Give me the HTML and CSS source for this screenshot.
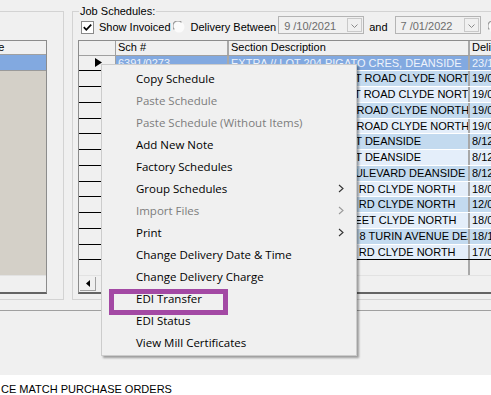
FILE: index.html
```html
<!DOCTYPE html>
<html>
<head>
<meta charset="utf-8">
<link rel="stylesheet" href="styles.css">
</head>
<body>
<div class="top">
  <div class="grp left-grp">
    <div class="grid mini">
      <div class="mhead">Name</div>
      <div class="mrow sel"></div>
      <div class="mbody"></div>
      <div class="hscroll"></div>
    </div>
  </div>
  <div class="grp job-grp">
    <div class="grp-title">Job Schedules:</div>
    <div class="filters">
      <svg class="chk" width="13" height="13" viewBox="0 0 13 13"><rect x="0.5" y="0.5" width="12" height="12" fill="#fff" stroke="#8a8a8a"/><path d="M2.8 6.2 L5.3 8.8 L10.2 3.6" fill="none" stroke="#000" stroke-width="1.7"/></svg>
      <span class="lbl">Show Invoiced</span>
      <svg class="radio" width="12" height="12" viewBox="0 0 12 12"><circle cx="6" cy="6" r="5.5" fill="#fbfbfb"/><path d="M1.3 8.5 A5 5 0 0 1 8.5 1.3" fill="none" stroke="#9a9a9a" stroke-width="1.2"/></svg>
      <span class="lbl dl">Delivery Between</span>
      <div class="picker"><span class="pv">9 /10/2021</span><span class="dd"><svg width="7" height="4" viewBox="0 0 7 4"><path d="M0.5 0.5 L3.5 3.5 L6.5 0.5" fill="none" stroke="#8a8a8a"/></svg></span></div>
      <span class="lbl and">and</span>
      <div class="picker p2"><span class="pv">7 /01/2022</span><span class="dd"><svg width="7" height="4" viewBox="0 0 7 4"><path d="M0.5 0.5 L3.5 3.5 L6.5 0.5" fill="none" stroke="#8a8a8a"/></svg></span></div>
      <svg class="radio r2" width="12" height="12" viewBox="0 0 12 12"><circle cx="6" cy="6" r="5.5" fill="#fbfbfb"/><path d="M1.3 8.5 A5 5 0 0 1 8.5 1.3" fill="none" stroke="#9a9a9a" stroke-width="1.2"/></svg>
    </div>
    <div class="grid job">
      <div class="grow ghead">
        <div class="c rh"></div><div class="c">Sch #</div><div class="c">Section Description</div><div class="c">Delivery Date</div>
      </div>
      <div class="grow sel"><div class="c rh"><svg class="ind" width="7" height="9" viewBox="0 0 7 9"><path d="M0 0 L7 4.5 L0 9 Z" fill="#000"/></svg></div><div class="c">6391/0273</div><div class="c">EXTRA // LOT 204 PIGATO CRES, DEANSIDE</div><div class="c">23/11/2021</div></div>
      <div class="grow a"><div class="c rh"></div><div class="c">6391/0274</div><div class="c">EXTRA // LOT 1410 HUNT ROAD CLYDE NORTH</div><div class="c">19/01/2022</div></div>
      <div class="grow b"><div class="c rh"></div><div class="c">6391/0275</div><div class="c">EXTRA // LOT 1411 HUNT ROAD CLYDE NORTH</div><div class="c">19/01/2022</div></div>
      <div class="grow a"><div class="c rh"></div><div class="c">6391/0276</div><div class="c">LOT 2207 THOMPSONS ROAD CLYDE NORTH</div><div class="c">19/01/2022</div></div>
      <div class="grow b"><div class="c rh"></div><div class="c">6391/0277</div><div class="c">LOT 2208 THOMPSONS ROAD CLYDE NORTH</div><div class="c">19/01/2022</div></div>
      <div class="grow a"><div class="c rh"></div><div class="c">6391/0278</div><div class="c">LOT 118 ELM CRESCENT DEANSIDE</div><div class="c">8/12/2021</div></div>
      <div class="grow b"><div class="c rh"></div><div class="c">6391/0279</div><div class="c">LOT 119 ELM CRESCENT DEANSIDE</div><div class="c">8/12/2021</div></div>
      <div class="grow a"><div class="c rh"></div><div class="c">6391/0280</div><div class="c">LOT 707 RIVERSIDE BOULEVARD DEANSIDE</div><div class="c">8/12/2021</div></div>
      <div class="grow b"><div class="c rh"></div><div class="c">6391/0281</div><div class="c">LOT 6501 PATTERSONS RD CLYDE NORTH</div><div class="c">18/01/2022</div></div>
      <div class="grow a"><div class="c rh"></div><div class="c">6391/0282</div><div class="c">LOT 6502 PATTERSONS RD CLYDE NORTH</div><div class="c">12/01/2022</div></div>
      <div class="grow b"><div class="c rh"></div><div class="c">6391/0283</div><div class="c">LOT 9111 GRAHAM STREET CLYDE NORTH</div><div class="c">18/01/2022</div></div>
      <div class="grow a"><div class="c rh"></div><div class="c">6391/0284</div><div class="c">EXTRA // LOT 4035 UNIT 8 TURIN AVENUE DEANSIDE</div><div class="c">18/11/2021</div></div>
      <div class="grow b last"><div class="c rh"></div><div class="c">6391/0285</div><div class="c">LOT 6503 PATTERSONS RD CLYDE NORTH</div><div class="c">17/01/2022</div></div>
      <div class="gfill"><div class="fc rh"></div><div class="fc w1"></div><div class="fc w2"></div><div class="fc"></div></div>
      <div class="hscroll"><span class="sbtn"><svg width="4" height="7" viewBox="0 0 4 7"><path d="M4 0 L0 3.5 L4 7 Z" fill="#000"/></svg></span></div>
    </div>
  </div>
</div>
<div class="lower"></div>
<div class="status">CE MATCH PURCHASE ORDERS</div>

<div class="menu">
  <div class="mi">Copy Schedule</div>
  <div class="mi dis">Paste Schedule</div>
  <div class="mi dis">Paste Schedule (Without Items)</div>
  <div class="mi">Add New Note</div>
  <div class="mi">Factory Schedules</div>
  <div class="mi">Group Schedules<svg class="chev" width="6" height="9" viewBox="0 0 6 9"><path d="M1 1 L5 4.5 L1 8" fill="none" stroke="#333" stroke-width="1.1"/></svg></div>
  <div class="mi dis">Import Files<svg class="chev" width="6" height="9" viewBox="0 0 6 9"><path d="M1 1 L5 4.5 L1 8" fill="none" stroke="#9a9a9a" stroke-width="1.1"/></svg></div>
  <div class="mi">Print<svg class="chev" width="6" height="9" viewBox="0 0 6 9"><path d="M1 1 L5 4.5 L1 8" fill="none" stroke="#333" stroke-width="1.1"/></svg></div>
  <div class="mi">Change Delivery Date &amp; Time</div>
  <div class="mi">Change Delivery Charge</div>
  <div class="mi">EDI Transfer</div>
  <div class="mi">EDI Status</div>
  <div class="mi">View Mill Certificates</div>
</div>
<div class="mark"></div>
</body>
</html>
```

FILE: styles.css
```css
html, body {
  margin: 0;
  padding: 0;
}
body {
  width: 491px;
  height: 395px;
  overflow: hidden;
  position: relative;
  background: #f0f0f0;
  font: 11px/13px "Liberation Sans", Arial, sans-serif;
  color: #000;
}
.top {
  display: flex;
  gap: 8px;
  padding-top: 11px;
  height: 300px;
  box-sizing: border-box;
}
.grp {
  flex: none;
  border: 1px solid #d3d3d3;
  box-sizing: border-box;
  height: 289px;
}
.left-grp {
  margin-left: -43px;
  width: 107px;
  padding: 28px 16px 0 13px;
}
.job-grp {
  width: 520px;
  padding: 0 0 0 5px;
}
.grp-title {
  width: max-content;
  margin: -7px 0 0 1px;
  padding: 0 1px;
  height: 13px;
  background: #f0f0f0;
}
.filters {
  display: flex;
  align-items: center;
  height: 18px;
  margin-top: -2px;
  white-space: nowrap;
}
.chk { margin: 4px 0 0 3px; flex: none; }
.lbl { margin: 4px 0 0 5px; }
.radio { margin: 3px 0 0 2px; flex: none; }
.lbl.dl { margin-left: 6px; }
.lbl.and { margin-left: 5px; }
.picker {
  flex: none;
  margin-left: 2px;
  width: 86px;
  height: 18px;
  box-sizing: border-box;
  border: 1px solid #b4b4b4;
  background: #f0f0f0;
  display: flex;
  align-items: center;
  justify-content: space-between;
  padding: 0 1px 0 5px;
  color: #6d6d6d;
}
.picker .pv { margin-top: 3px; }
.picker.p2 { margin-left: 7px; }
.dd {
  width: 15px;
  height: 14px;
  box-sizing: border-box;
  border: 1px solid #c9c9c9;
  display: flex;
  align-items: center;
  justify-content: center;
  padding-top: 1px;
}
.radio.r2 { margin-left: 7px; }

/* grids */
.grid {
  box-sizing: border-box;
  border: 1px solid #8c8c8c;
  border-bottom: 2px solid #646464;
  display: flex;
  flex-direction: column;
}
.mini {
  height: 254px;
  background: #d4d0c8;
}
.mhead {
  height: 14px;
  flex: none;
  background: #f0f0f0;
  border-bottom: 1px solid #a0a0a0;
  padding-left: 3px;
  box-sizing: border-box;
  line-height: 13px;
}
.mrow {
  height: 15px;
  flex: none;
  border-bottom: 1px solid #9a9a9a;
}
.mrow.sel { background: #82a9e0; }
.mbody { flex: 1; }
.hscroll {
  height: 16px;
  flex: none;
  background: #f0f0f0;
  border-top: 1px solid #e2e2e2;
  display: flex;
}
.sbtn {
  width: 16px;
  height: 14px;
  margin: 1px 0 0 1px;
  box-sizing: border-box;
  border-right: 1px solid #a0a0a0;
  border-bottom: 1px solid #a0a0a0;
  display: flex;
  align-items: center;
  justify-content: center;
}
.job {
  margin-top: 6px;
  width: 470px;
  height: 254px;
  background: #f0f0f0;
}
.grow {
  display: grid;
  grid-template-columns: 37px 113px 241px 100px;
  height: 15.75px;
  flex: none;
  box-sizing: border-box;
  border-bottom: 1px solid #fff;
  white-space: nowrap;
}
.grow .c {
  overflow: hidden;
  padding-left: 2px;
  line-height: 14px;
  border-right: 2px solid #a8a8a8;
}
.grow .c.rh {
  border-right: 1px solid #a0a0a0;
  border-bottom: 1px solid #000;
  margin-bottom: -1px;
  background: #f0f0f0;
  display: flex;
  align-items: center;
  justify-content: flex-end;
  padding: 0 13px 0 0;
}
.ghead {
  height: 14.5px;
  background: #f0f0f0;
  border-bottom: 1px solid #a0a0a0;
}
.ghead .c { line-height: 13px; padding-left: 2px; }
.ghead .c.rh { border-bottom: 0; margin: 0; }
.grow.sel { background: #82a9e0; color: #eef3fb; }
.grow.a { background: #c3daef; }
.grow.b { background: #e4eefa; }
.grow.last { border-bottom: 1px solid #000; }
.gfill {
  flex: 1;
  display: grid;
  grid-template-columns: 37px 113px 241px 100px;
}
.fc { border-right: 2px solid #a8a8a8; }
.fc.rh { border-right: 1px solid #a0a0a0; }

.lower {
  height: 75px;
  box-sizing: border-box;
  padding-top: 10px;
}
.lower::before {
  content: "";
  display: block;
  border-top: 1px solid #a0a0a0;
}
.status {
  height: 20px;
  background: #fff;
  box-sizing: border-box;
  padding: 8px 0 0 1px;
  white-space: nowrap;
}

/* context menu */
.menu {
  position: absolute;
  left: 101px;
  top: 64px;
  width: 256px;
  box-sizing: border-box;
  padding: 2px;
  border: 1px solid #cccccc;
  background: #f0f0f0;
  box-shadow: 2px 2px 2px rgba(0, 0, 0, 0.35);
  font: 11.5px "Open Sans", "Noto Sans", sans-serif;
  color: #000;
}
.mi {
  height: 22px;
  display: flex;
  align-items: center;
  justify-content: space-between;
  padding: 0 10px 0 32px;
  white-space: nowrap;
}
.mi.dis { color: #7d7d7d; }
.mark {
  position: absolute;
  left: 109px;
  top: 289px;
  width: 119px;
  height: 26px;
  box-sizing: border-box;
  border: 5px solid #a349a4;
}
```
